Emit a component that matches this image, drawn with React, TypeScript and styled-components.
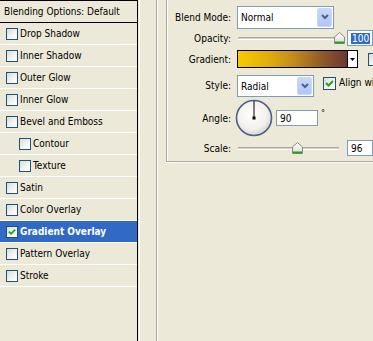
import React from 'react'
import styled, { createGlobalStyle } from 'styled-components'

const GlobalStyle = createGlobalStyle`
  html, body {
    margin: 0;
    padding: 0;
    background: #ece9d8;
  }
  body {
    font-family: 'DejaVu Sans Condensed', 'Liberation Sans', sans-serif;
    font-size: 10px;
    color: #000;
  }
`

const Dialog = styled.div`
  display: flex;
  width: 373px;
  height: 341px;
  overflow: hidden;
  background: #ece9d8;
`

// left list of effects
const StyleList = styled.ul`
  flex: none;
  list-style: none;
  margin: 0;
  padding: 0;
  width: 137px;
  border-top: 1px solid #000;
  border-right: 1px solid #000;
  box-shadow: 1px 0 0 #ece9d8, 2px 0 0 #fff;
`

const ListHeader = styled.li`
  height: 21px;
  line-height: 21px;
  padding-left: 4px;
  border-bottom: 1px solid #000;
  white-space: nowrap;
`

const ListItem = styled.li<{ $selected?: boolean; $indent?: boolean }>`
  display: flex;
  align-items: center;
  gap: 2px;
  height: 21px;
  padding-left: ${p => (p.$indent ? 19 : 6)}px;
  border-bottom: 1px solid #fff;
  white-space: nowrap;
  background: ${p => (p.$selected ? '#316ac5' : 'transparent')};
  color: ${p => (p.$selected ? '#fff' : '#000')};
  font-weight: ${p => (p.$selected ? 'bold' : 'normal')};
`

const Box = styled.span<{ $size: number }>`
  flex: none;
  box-sizing: border-box;
  width: ${p => p.$size}px;
  height: ${p => p.$size}px;
  border: 1px solid #1c5180;
  background: linear-gradient(135deg, #dcdcd5 0%, #f3f3ef 55%, #fff 100%);
  display: flex;
  align-items: center;
  justify-content: center;
`

function Checkbox({ checked = false, size = 12 }: { checked?: boolean; size?: number }) {
  return (
    <Box $size={size}>
      {checked && (
        <svg width={size - 2} height={size - 2} viewBox="0 0 11 11">
          <polyline points="2,5 4.5,7.5 9,3" fill="none" stroke="#21a121" strokeWidth="2" />
        </svg>
      )}
    </Box>
  )
}

// right side
const Pane = styled.div`
  flex: none;
  margin-left: 18px;
  padding-left: 9px;
  border-left: 1px solid #aca899;
  box-shadow: inset 1px 0 0 #fff;
`

const GroupBox = styled.div`
  width: 230px;
  height: 162px;
  box-sizing: border-box;
  padding: 5px 0 3px;
  border-left: 1px solid #aca899;
  border-bottom: 1px solid #aca899;
  box-shadow: inset 1px 0 0 #fff, 0 1px 0 #fff;
  display: grid;
  grid-template-columns: 64px 1fr;
  grid-template-rows: 24px 18px 24px 28px 38px 22px;
  column-gap: 6px;
`

const Label = styled.span`
  align-self: center;
  text-align: right;
  white-space: nowrap;
`

const Control = styled.div<{ $top?: boolean }>`
  display: flex;
  align-items: ${p => (p.$top ? 'flex-start' : 'center')};
  padding-top: ${p => (p.$top ? 4 : 0)}px;
  white-space: nowrap;
`

const SelectBox = styled.div<{ $width: number; $height: number }>`
  flex: none;
  display: flex;
  box-sizing: border-box;
  width: ${p => p.$width}px;
  height: ${p => p.$height}px;
  padding: 1px;
  border: 1px solid #7f9db9;
  background: #fff;
`

const SelectValue = styled.span`
  flex: 1;
  display: flex;
  align-items: center;
  padding-left: 2px;
`

const SelectButton = styled.span`
  width: 15px;
  box-sizing: border-box;
  border: 1px solid #c9d7fa;
  border-radius: 2px;
  background: linear-gradient(#c8d7fd, #b2c5f6);
  display: flex;
  align-items: center;
  justify-content: center;
`

function Select({ value, width, height }: { value: string; width: number; height: number }) {
  return (
    <SelectBox $width={width} $height={height}>
      <SelectValue>{value}</SelectValue>
      <SelectButton>
        <svg width="8" height="6" viewBox="0 0 8 6">
          <polyline points="1,1 4,4 7,1" fill="none" stroke="#4d6185" strokeWidth="2" />
        </svg>
      </SelectButton>
    </SelectBox>
  )
}

const SliderWrap = styled.div`
  position: relative;
  flex: none;
  width: 110px;
  height: 14px;
  display: flex;
  align-items: center;
`

const Track = styled.div`
  margin-left: 1px;
  width: 101px;
  height: 1px;
  border-top: 1px solid #aca899;
  border-bottom: 1px solid #fff;
  background: #d6d3c6;
`

const Thumb = styled.svg`
  position: absolute;
  top: 1px;
`

function Slider({ value, min, max }: { value: number; min: number; max: number }) {
  const center = 1 + ((value - min) / (max - min)) * 101
  return (
    <SliderWrap>
      <Track />
      <Thumb width="11" height="12" viewBox="0 0 11 12" style={{ left: center - 5.5 }}>
        <defs>
          <linearGradient id="thumbFill" x1="0" y1="0" x2="0" y2="1">
            <stop offset="0" stopColor="#ffffff" />
            <stop offset="1" stopColor="#dedbd0" />
          </linearGradient>
        </defs>
        <polygon points="0.5,5 5.5,0.5 10.5,5 10.5,11.5 0.5,11.5" fill="url(#thumbFill)" stroke="#8b8a7f" />
        <rect x="1" y="9.5" width="9" height="2" fill="#21a121" />
      </Thumb>
    </SliderWrap>
  )
}

const NumberField = styled.div<{ $width: number }>`
  flex: none;
  box-sizing: border-box;
  width: ${p => p.$width}px;
  height: 16px;
  padding-left: 3px;
  border: 1px solid #7f9db9;
  background: #fff;
  display: flex;
  align-items: center;
`

const Selection = styled.span`
  background: #316ac5;
  color: #fff;
  padding: 0 1px;
  line-height: 11px;
`

const GradientPicker = styled.div`
  flex: none;
  display: flex;
  box-sizing: border-box;
  width: 121px;
  height: 18px;
  border: 1px solid #000;
`

const GradientFill = styled.div`
  flex: 1;
  background: linear-gradient(to right, #f9c900 0%, #e2ad0c 28%, #c08a1c 52%, #946026 74%, #6b3634 100%);
`

const GradientArrow = styled.div`
  width: 9px;
  border-left: 1px solid #000;
  background: #fff;
  display: flex;
  align-items: center;
  justify-content: center;
`

const Dial = styled.svg`
  flex: none;
  margin-left: -2px;
`

const Degree = styled.span`
  align-self: flex-start;
  margin: 9px 0 0 3px;
  font-size: 9px;
`

const CheckLabel = styled.span`
  margin-left: 3px;
  margin-top: 2px;
`

const effects: { name: string; checked?: boolean; indent?: boolean }[] = [
  { name: 'Drop Shadow' },
  { name: 'Inner Shadow' },
  { name: 'Outer Glow' },
  { name: 'Inner Glow' },
  { name: 'Bevel and Emboss' },
  { name: 'Contour', indent: true },
  { name: 'Texture', indent: true },
  { name: 'Satin' },
  { name: 'Color Overlay' },
  { name: 'Gradient Overlay', checked: true },
  { name: 'Pattern Overlay' },
  { name: 'Stroke' },
]

export default function App() {
  return (
    <>
      <GlobalStyle />
      <Dialog>
        <StyleList>
          <ListHeader>Blending Options: Default</ListHeader>
          {effects.map(e => (
            <ListItem key={e.name} $selected={e.checked} $indent={e.indent}>
              <Checkbox checked={e.checked} />
              {e.name}
            </ListItem>
          ))}
        </StyleList>

        <Pane>
          <GroupBox>
            <Label>Blend Mode:</Label>
            <Control>
              <Select value="Normal" width={97} height={23} />
            </Control>

            <Label>Opacity:</Label>
            <Control>
              <Slider value={100} min={0} max={100} />
              <NumberField $width={26}>
                <Selection>100</Selection>
              </NumberField>
            </Control>

            <Label>Gradient:</Label>
            <Control>
              <GradientPicker>
                <GradientFill />
                <GradientArrow>
                  <svg width="5" height="3" viewBox="0 0 5 3">
                    <polygon points="0,0 5,0 2.5,3" fill="#000" />
                  </svg>
                </GradientArrow>
              </GradientPicker>
              <span style={{ marginLeft: 10 }} />
              <Checkbox size={13} />
            </Control>

            <Label>Style:</Label>
            <Control $top>
              <Select value="Radial" width={77} height={22} />
              <span style={{ marginLeft: 9 }} />
              <span style={{ marginTop: 2, display: 'flex' }}>
                <Checkbox checked size={13} />
              </span>
              <CheckLabel>Align with Layer</CheckLabel>
            </Control>

            <Label>Angle:</Label>
            <Control>
              <Dial width="38" height="38" viewBox="0 0 38 38">
                <defs>
                  <radialGradient id="dialFill" cx="0.45" cy="0.4" r="0.6">
                    <stop offset="0" stopColor="#ffffff" />
                    <stop offset="0.7" stopColor="#f1f0ec" />
                    <stop offset="1" stopColor="#d5d4d0" />
                  </radialGradient>
                </defs>
                <circle cx="19" cy="19" r="17.5" fill="url(#dialFill)" stroke="#4f6088" strokeWidth="1.6" />
                <line x1="19" y1="19" x2="19" y2="2" stroke="#000" strokeWidth="1" />
                <rect x="17.5" y="17.5" width="3" height="3" fill="#000" />
              </Dial>
              <span style={{ marginLeft: 3 }} />
              <NumberField $width={42}>90</NumberField>
              <Degree>°</Degree>
            </Control>

            <Label>Scale:</Label>
            <Control>
              <Slider value={96} min={10} max={155} />
              <NumberField $width={26}>96</NumberField>
            </Control>
          </GroupBox>
        </Pane>
      </Dialog>
    </>
  )
}
